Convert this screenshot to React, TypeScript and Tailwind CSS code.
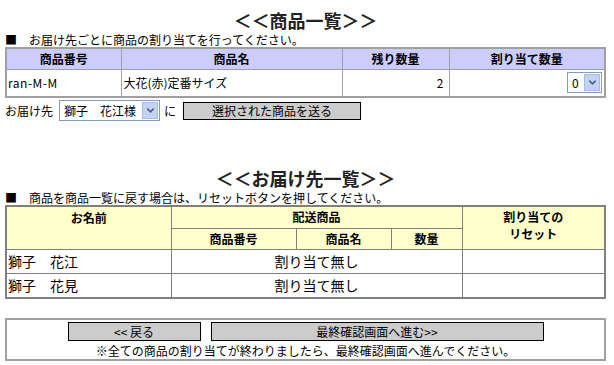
import { ChevronDown } from "lucide-react";

const font = { fontFamily: '"Noto Sans CJK JP", "Noto Sans", sans-serif' };

function FakeSelect({ label, className }: { label: string; className: string }) {
    return (
        <div className={`flex items-stretch bg-white border border-[#7f9db9] ${className}`}>
            <span className="flex-1 pl-[4px] text-[12px] leading-[19px] text-black whitespace-nowrap overflow-hidden">{label}</span>
            <span className="w-[16px] m-[1px] bg-[#c3d3f1] border border-[#a6bbe8] flex items-center justify-center">
                <ChevronDown size={11} strokeWidth={3.5} className="text-[#4d6185]" />
            </span>
        </div>
    );
}

export default function App() {
    return (
        <div className="w-[614px] h-[365px] bg-white text-black text-[12px] overflow-hidden" style={font}>
            <div className="ml-[5px] w-[601px]">
                {/* 商品一覧 */}
                <h1 className="h-[32px] pt-[9px] text-center text-[18px] leading-[22px] font-bold text-[#222]">＜＜商品一覧＞＞</h1>
                <p className="h-[15px] leading-[15px] whitespace-nowrap">■　お届け先ごとに商品の割り当てを行ってください。</p>
                <table className="w-[601px] border-collapse border-2 border-[#a0a0a0] table-fixed">
                    <colgroup>
                        <col className="w-[115px]" />
                        <col className="w-[221px]" />
                        <col className="w-[107px]" />
                        <col />
                    </colgroup>
                    <thead>
                        <tr className="h-[21px] bg-[#ccccff]">
                            <th className="border border-[#a0a0a0] font-bold">商品番号</th>
                            <th className="border border-[#a0a0a0] font-bold">商品名</th>
                            <th className="border border-[#a0a0a0] font-bold">残り数量</th>
                            <th className="border border-[#a0a0a0] font-bold">割り当て数量</th>
                        </tr>
                    </thead>
                    <tbody>
                        <tr className="h-[28px]">
                            <td className="border border-[#a0a0a0] pl-[1px] tracking-[0.5px]">ran-M-M</td>
                            <td className="border border-[#a0a0a0] pl-[2px]">大花(赤)定番サイズ</td>
                            <td className="border border-[#a0a0a0] text-right pr-[5px]">2</td>
                            <td className="border border-[#a0a0a0] pr-[2px]">
                                <div className="flex justify-end">
                                    <FakeSelect label="0" className="w-[35px] h-[21px]" />
                                </div>
                            </td>
                        </tr>
                    </tbody>
                </table>
                <div className="flex items-center h-[23px] mt-[1px]">
                    <span className="mr-[6px]">お届け先</span>
                    <FakeSelect label="獅子　花江様" className="w-[101px] h-[21px]" />
                    <span className="ml-[4px] mr-[7px]">に</span>
                    <button className="w-[178px] h-[18px] bg-[#cccccc] border border-black text-[12px] leading-[16px] text-black">選択された商品を送る</button>
                </div>

                {/* お届け先一覧 */}
                <h1 className="h-[30px] mt-[38px] pt-[7px] text-center text-[18px] leading-[22px] font-bold text-[#222]">＜＜お届け先一覧＞＞</h1>
                <p className="h-[15px] leading-[15px] whitespace-nowrap">■　商品を商品一覧に戻す場合は、リセットボタンを押してください。</p>
                <table className="w-[601px] border-collapse border-2 border-[#808080] table-fixed">
                    <colgroup>
                        <col className="w-[165px]" />
                        <col className="w-[125px]" />
                        <col className="w-[95px]" />
                        <col className="w-[71px]" />
                        <col />
                    </colgroup>
                    <thead>
                        <tr className="h-[22px] bg-[#ffffcc]">
                            <th rowSpan={2} className="align-top pt-[2px] border border-[#808080] font-bold">お名前</th>
                            <th colSpan={3} className="border border-[#808080] font-bold">配送商品</th>
                            <th rowSpan={2} className="align-top pt-[1px] border border-[#808080] font-bold leading-[17px]">割り当ての<br />リセット</th>
                        </tr>
                        <tr className="h-[21px] bg-[#ffffcc]">
                            <th className="border border-[#808080] font-bold">商品番号</th>
                            <th className="border border-[#808080] font-bold">商品名</th>
                            <th className="border border-[#808080] font-bold">数量</th>
                        </tr>
                    </thead>
                    <tbody className="text-[14px]">
                        <tr className="h-[24px]">
                            <td className="border border-[#808080] pl-[1px]">獅子　花江</td>
                            <td colSpan={3} className="border border-[#808080] text-center">割り当て無し</td>
                            <td className="border border-[#808080]"></td>
                        </tr>
                        <tr className="h-[25px]">
                            <td className="border border-[#808080] pl-[1px]">獅子　花見</td>
                            <td colSpan={3} className="border border-[#808080] text-center">割り当て無し</td>
                            <td className="border border-[#808080]"></td>
                        </tr>
                    </tbody>
                </table>

                {/* ボタン */}
                <div className="mt-[19px] h-[43px] border-2 border-[#a0a0a0] flex flex-col items-center pt-[2px]">
                    <div className="flex gap-[10px]">
                        <button className="w-[133px] h-[19px] bg-[#cccccc] border border-black text-[12px] leading-[17px] text-black">&lt;&lt; 戻る</button>
                        <button className="w-[333px] h-[19px] bg-[#cccccc] border border-black text-[12px] leading-[17px] text-black">最終確認画面へ進む&gt;&gt;</button>
                    </div>
                    <p className="leading-[17px] mt-[1px]">※全ての商品の割り当てが終わりましたら、最終確認画面へ進んでください。</p>
                </div>
            </div>
        </div>
    );
}
